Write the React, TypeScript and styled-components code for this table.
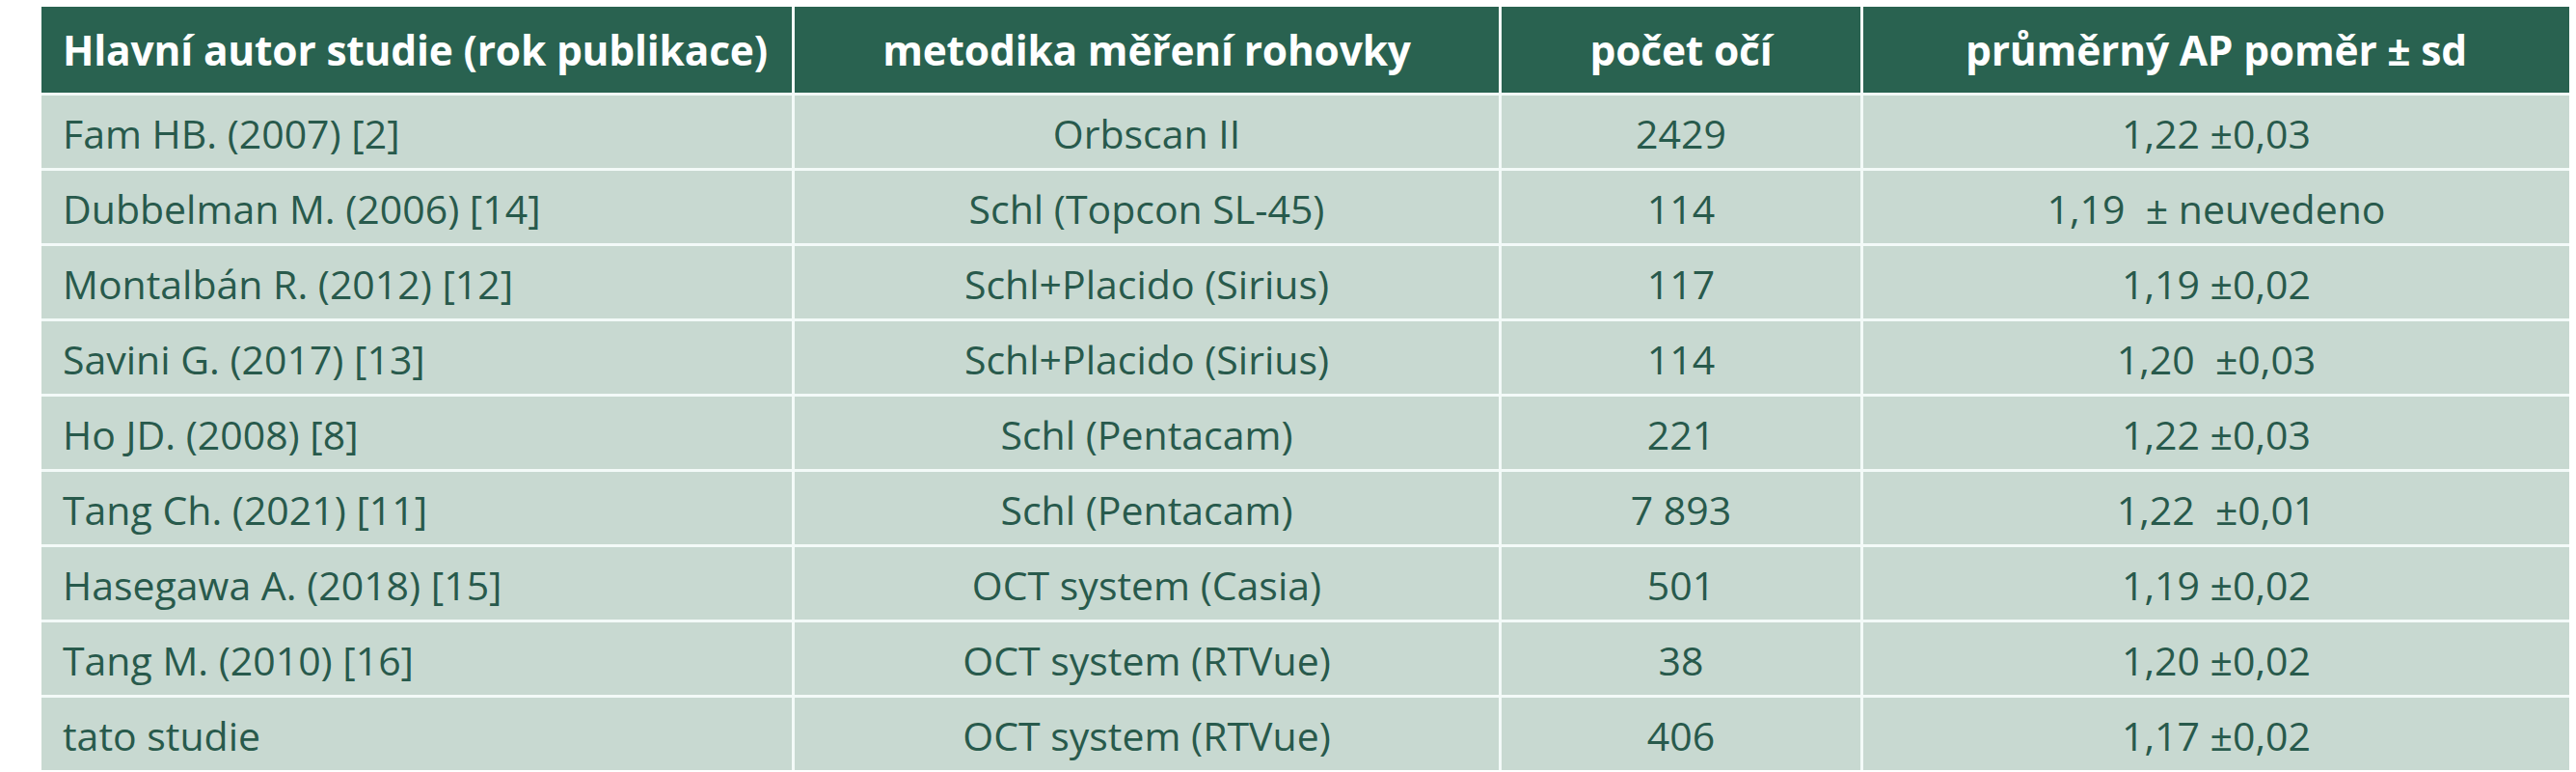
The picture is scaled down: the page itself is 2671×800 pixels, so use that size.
import React from "react";
import styled, { createGlobalStyle } from "styled-components";

const GlobalStyle = createGlobalStyle`
  html, body {
    margin: 0;
    padding: 0;
    background: #ffffff;
  }
  body {
    font-family: "Open Sans", "Noto Sans", "Liberation Sans", sans-serif;
  }
`;

const Page = styled.div`
  padding: 7px 0 0 43px;
`;

const Table = styled.div`
  display: grid;
  width: 2621px;
  grid-template-columns: 778px 730px 372px 732px;
  grid-template-rows: 89px repeat(9, 75px);
  gap: 3px;
  background: #f3faf8;
`;

type Align = "left" | "center";

const HeaderCell = styled.div<{ $align: Align }>`
  display: flex;
  align-items: center;
  justify-content: ${(p) => (p.$align === "left" ? "flex-start" : "center")};
  padding: ${(p) => (p.$align === "left" ? "0 0 0 22px" : "0")};
  background: #296250;
  color: #ffffff;
  font-family: "Open Sans", "Noto Sans", sans-serif;
  font-weight: 700;
  font-size: 42.5px;
  letter-spacing: -0.2px;
  white-space: pre;
`;

const Cell = styled.div<{ $align: Align }>`
  display: flex;
  align-items: center;
  justify-content: ${(p) => (p.$align === "left" ? "flex-start" : "center")};
  padding: ${(p) => (p.$align === "left" ? "3px 0 0 22px" : "3px 0 0 0")};
  background: #c8d9d1;
  color: #285a4c;
  font-family: "Open Sans", "Noto Sans", sans-serif;
  font-weight: 400;
  font-size: 41px;
  white-space: pre;
`;

const headers = [
  "Hlavní autor studie (rok publikace)",
  "metodika měření rohovky",
  "počet očí",
  "průměrný AP poměr ± sd",
];

const rows: string[][] = [
  ["Fam HB. (2007) [2]", "Orbscan II", "2429", "1,22 ±0,03"],
  ["Dubbelman M. (2006) [14]", "Schl (Topcon SL-45)", "114", "1,19  ± neuvedeno"],
  ["Montalbán R. (2012) [12]", "Schl+Placido (Sirius)", "117", "1,19 ±0,02"],
  ["Savini G. (2017) [13]", "Schl+Placido (Sirius)", "114", "1,20  ±0,03"],
  ["Ho JD. (2008) [8]", "Schl (Pentacam)", "221", "1,22 ±0,03"],
  ["Tang Ch. (2021) [11]", "Schl (Pentacam)", "7 893", "1,22  ±0,01"],
  ["Hasegawa A. (2018) [15]", "OCT system (Casia)", "501", "1,19 ±0,02"],
  ["Tang M. (2010) [16]", "OCT system (RTVue)", "38", "1,20 ±0,02"],
  ["tato studie", "OCT system (RTVue)", "406", "1,17 ±0,02"],
];

export default function App() {
  return (
    <>
      <GlobalStyle />
      <Page>
        <Table>
          {headers.map((h, i) => (
            <HeaderCell key={h} $align={i === 0 ? "left" : "center"}>
              {h}
            </HeaderCell>
          ))}
          {rows.map((r, ri) =>
            r.map((c, ci) => (
              <Cell key={`${ri}-${ci}`} $align={ci === 0 ? "left" : "center"}>
                {c}
              </Cell>
            ))
          )}
        </Table>
      </Page>
    </>
  );
}
